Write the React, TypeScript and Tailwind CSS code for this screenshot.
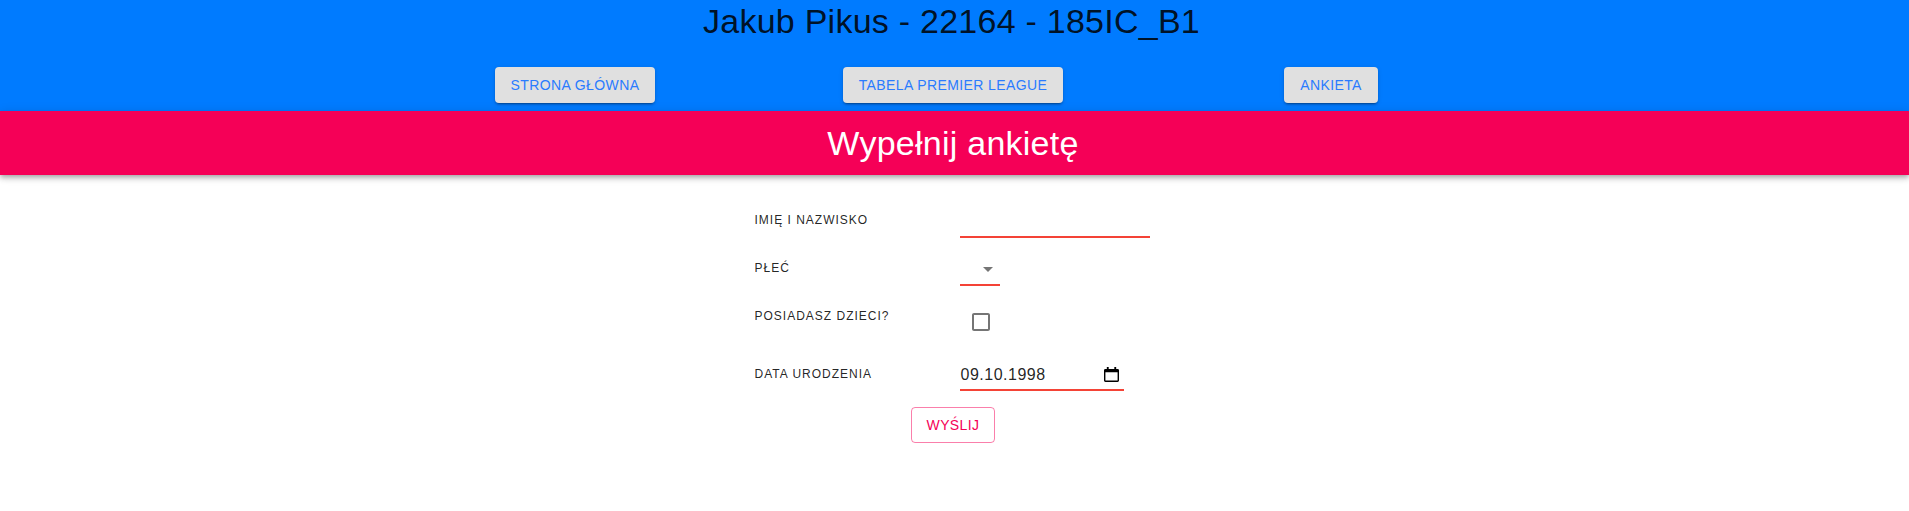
import React from 'react';

const navItems = ['Strona główna', 'Tabela Premier League', 'Ankieta'];

const labelCls = "text-[12px] leading-[32px] tracking-[1px] uppercase text-black/[0.87]";

const App: React.FC = () => {
  return (
    <div className="min-h-[511px] bg-white font-['Liberation_Sans',Arial,sans-serif]">
      {/* Header */}
      <div className="bg-[#007bff] pb-[8px] pr-[3px]">
        <h1 className="h-[42px] pr-[3px] text-center text-[34px] leading-[42px] tracking-[0.25px] text-black/[0.87]">
          Jakub Pikus - 22164 - 185IC_B1
        </h1>
        <div className="mt-[25px] mx-auto w-[1134px] grid grid-cols-3 justify-items-center">
          {navItems.map((item) => (
            <button
              key={item}
              className="h-[36px] px-4 rounded bg-[#e0e0e0] text-[14px] uppercase tracking-[0.4px] text-[#2a7bff] shadow-[0px_3px_1px_-2px_rgba(0,0,0,0.2),0px_2px_2px_0px_rgba(0,0,0,0.14),0px_1px_5px_0px_rgba(0,0,0,0.12)]"
            >
              {item}
            </button>
          ))}
        </div>
      </div>

      {/* Title bar */}
      <div className="relative z-10 h-[64px] pr-[3px] flex items-center justify-center bg-[#f50057] shadow-[0px_2px_4px_-1px_rgba(0,0,0,0.2),0px_4px_5px_0px_rgba(0,0,0,0.14),0px_1px_10px_0px_rgba(0,0,0,0.12)]">
        <h2 className="text-[34px] leading-[42px] tracking-[0.25px] text-white">Wypełnij ankietę</h2>
      </div>

      {/* Form */}
      <div className="pr-[3px]">
        <div className="mx-auto w-[397px] pt-[29px]">
          <div className="grid grid-cols-[205px_1fr] h-[48px] items-start">
            <span className={labelCls}>Imię i nazwisko</span>
            <input
              type="text"
              className="mt-[2px] h-[32px] w-[190px] border-b-2 border-[#f44336] bg-transparent outline-none text-[16px]"
            />
          </div>

          <div className="grid grid-cols-[205px_1fr] h-[48px] items-start">
            <span className={labelCls}>Płeć</span>
            <div className="mt-[2px] h-[32px] w-[40px] border-b-2 border-[#f44336] flex items-center justify-end">
              <svg viewBox="0 0 24 24" className="w-6 h-6 fill-black/[0.54]">
                <path d="M7 10l5 5 5-5z" />
              </svg>
            </div>
          </div>

          <div className="grid grid-cols-[205px_1fr] h-[58px] items-start">
            <span className={labelCls}>Posiadasz dzieci?</span>
            <div className="mt-[1px] w-[42px] h-[42px] p-[9px]">
              <svg viewBox="0 0 24 24" className="w-6 h-6 fill-black/[0.54]">
                <path d="M19 5v14H5V5h14m0-2H5c-1.1 0-2 .9-2 2v14c0 1.1.9 2 2 2h14c1.1 0 2-.9 2-2V5c0-1.1-.9-2-2-2z" />
              </svg>
            </div>
          </div>

          <div className="grid grid-cols-[205px_1fr] items-start">
            <span className={labelCls}>Data urodzenia</span>
            <div className="mt-[1px] h-[32px] w-[164px] border-b-2 border-[#f44336] flex items-center justify-between pl-[1px] pr-[5px]">
              <span className="text-[16px] leading-[19px] tracking-[0.5px] text-black/[0.87]">09.10.1998</span>
              <svg viewBox="0 0 16 16" className="w-[15px] h-[15px] fill-black" fillRule="evenodd">
                <path d="M3 0h2v2h6V0h2v2h1.5A1.5 1.5 0 0 1 16 3.5v11a1.5 1.5 0 0 1-1.5 1.5h-13A1.5 1.5 0 0 1 0 14.5v-11A1.5 1.5 0 0 1 1.5 2H3V0zM1.5 5.5v9h13v-9h-13z" />
              </svg>
            </div>
          </div>

          <div className="mt-[16px] flex justify-center">
            <button className="h-[36px] px-[15px] rounded border border-[#f50057]/50 text-[14px] uppercase tracking-[0.4px] text-[#f50057]">
              Wyślij
            </button>
          </div>
        </div>
      </div>
    </div>
  );
};

export default App;
